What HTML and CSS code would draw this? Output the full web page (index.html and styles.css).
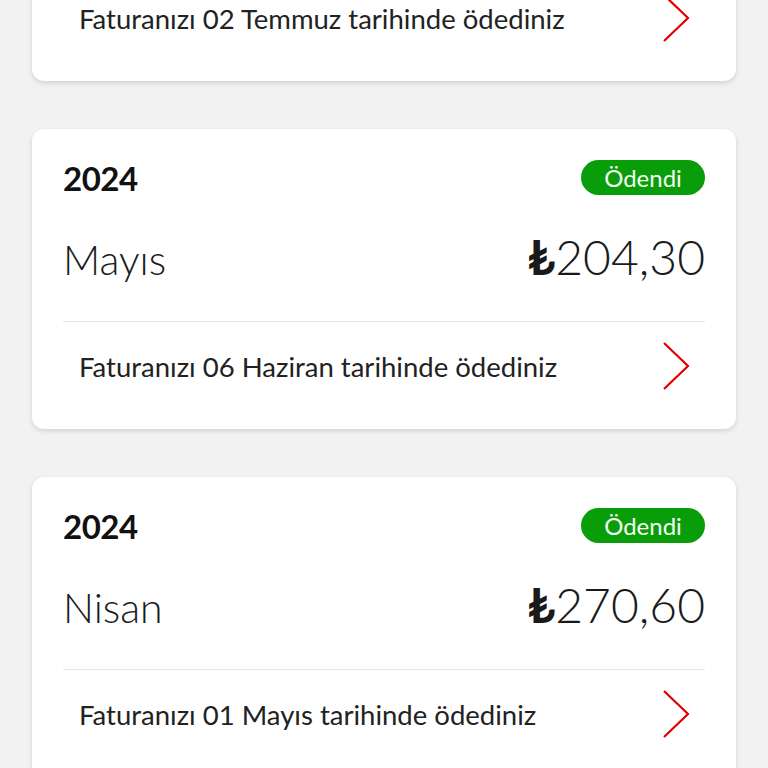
FILE: index.html
```html
<!DOCTYPE html>
<html lang="tr">
<head>
<meta charset="utf-8">
<link rel="stylesheet" href="styles.css">
</head>
<body>
<div class="list">
  <div class="card">
    <div class="head"><span class="year">2024</span><span class="badge">Ödendi</span></div>
    <div class="mid"><span class="month">Haziran</span><span class="amount"><span class="cur">₺</span>198,40</span></div>
    <div class="foot"><span class="msg">Faturanızı 02 Temmuz tarihinde ödediniz</span>
      <svg class="chev" viewBox="0 0 28 48"><path d="M2 1 L26 24 L2 47" fill="none" stroke="#e00000" stroke-width="2.2"/></svg></div>
  </div>
  <div class="card">
    <div class="head"><span class="year">2024</span><span class="badge">Ödendi</span></div>
    <div class="mid"><span class="month">Mayıs</span><span class="amount"><span class="cur">₺</span>204,30</span></div>
    <div class="foot"><span class="msg">Faturanızı 06 Haziran tarihinde ödediniz</span>
      <svg class="chev" viewBox="0 0 28 48"><path d="M2 1 L26 24 L2 47" fill="none" stroke="#e00000" stroke-width="2.2"/></svg></div>
  </div>
  <div class="card">
    <div class="head"><span class="year">2024</span><span class="badge">Ödendi</span></div>
    <div class="mid"><span class="month">Nisan</span><span class="amount"><span class="cur">₺</span>270,60</span></div>
    <div class="foot"><span class="msg">Faturanızı 01 Mayıs tarihinde ödediniz</span>
      <svg class="chev" viewBox="0 0 28 48"><path d="M2 1 L26 24 L2 47" fill="none" stroke="#e00000" stroke-width="2.2"/></svg></div>
  </div>
</div>
</body>
</html>
```
FILE: styles.css
```css
html, body { margin: 0; padding: 0; }
body {
  background: #f2f2f2;
  font-family: Lato, "Noto Sans", sans-serif;
  color: #1a1a1a;
  overflow: hidden;
  height: 768px;
}
.list {
  display: flex;
  flex-direction: column;
  gap: 48px;
  padding: 0 32px;
  margin-top: -219px;
}
.card {
  background: #fff;
  border-radius: 12px;
  box-shadow: 0 2px 5px rgba(0,0,0,0.14);
  height: 300px;
  box-sizing: border-box;
  padding: 31px 31px 0 31px;
  display: flex;
  flex-direction: column;
}
.head {
  display: flex;
  justify-content: space-between;
  align-items: center;
  height: 35px;
}
.year {
  font-weight: 700;
  font-size: 33px;
  letter-spacing: -0.5px;
  color: #111;
}
.badge {
  background: #0a9d0a;
  color: #f4fff4;
  border-radius: 18px;
  height: 35px;
  width: 124px;
  box-sizing: border-box;
  display: flex;
  align-items: center;
  justify-content: center;
  font-size: 24px;
  font-weight: 400;
}
.mid {
  display: flex;
  justify-content: space-between;
  align-items: baseline;
  margin-top: 38px;
  height: 89px;
  border-bottom: 1px solid #e6e6e6;
  box-sizing: border-box;
}
.month {
  font-size: 41px;
  font-weight: 300;
  line-height: 1;
}
.amount {
  font-size: 48px;
  font-weight: 300;
  line-height: 1;
}
.cur { font-weight: 700; }
.foot {
  display: flex;
  justify-content: space-between;
  align-items: center;
  height: 88px;
  padding: 0 15px 0 16px;
}
.msg {
  font-size: 27.5px;
  font-weight: 400;
  color: #222;
}
.chev { width: 28px; height: 48px; }
```
